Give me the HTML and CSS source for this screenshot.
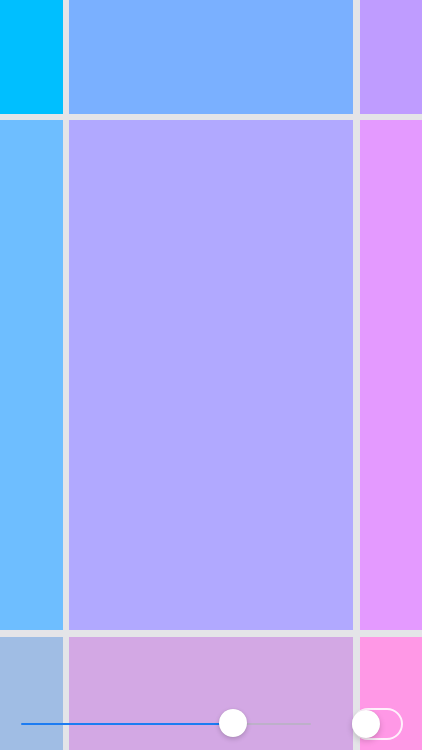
FILE: index.html
```html
<!DOCTYPE html>
<html>
<head>
<meta charset="utf-8">
<link rel="stylesheet" href="styles.css">
</head>
<body>
<div class="screen">
  <div class="grid">
    <div class="cell c11"></div>
    <div class="cell c12"></div>
    <div class="cell c13"></div>
    <div class="cell c21"></div>
    <div class="cell c22"></div>
    <div class="cell c23"></div>
    <div class="cell c31"></div>
    <div class="cell c32"></div>
    <div class="cell c33"></div>
  </div>
  <div class="controls">
    <div class="slider">
      <div class="track"></div>
      <div class="fill" style="width:212px"></div>
      <div class="thumb" style="left:198px"></div>
    </div>
    <div class="toggle">
      <div class="knob"></div>
    </div>
  </div>
</div>
</body>
</html>
```

FILE: styles.css
```css
html, body {
  margin: 0;
  padding: 0;
  width: 422px;
  height: 750px;
  overflow: hidden;
  font-family: "Liberation Sans", sans-serif;
}
.screen {
  position: relative;
  width: 422px;
  height: 750px;
  background: #e4e4e8;
}
.grid {
  display: grid;
  grid-template-columns: 62.5px 284px 62.5px;
  grid-template-rows: 113.5px 510px 113.5px;
  gap: 6.5px;
  width: 422px;
  height: 750px;
}
.c11 { background: #00bfff; }
.c12 { background: #7ab0ff; }
.c13 { background: #bf9cff; }
.c21 { background: #6ebeff; }
.c22 { background: #b1a9ff; }
.c23 { background: #e49aff; }
.c31 { background: #a0bde4; }
.c32 { background: #d3a8e4; }
.c33 { background: #ff98e6; }

.controls {
  position: absolute;
  left: 21px;
  right: 19px;
  top: 708px;
  height: 32px;
  display: flex;
  align-items: center;
  justify-content: space-between;
}
.slider {
  position: relative;
  width: 290px;
  height: 32px;
}
.track {
  position: absolute;
  left: 0;
  right: 0;
  top: 15px;
  height: 2px;
  border-radius: 1px;
  background: rgba(180, 180, 190, 0.7);
}
.fill {
  position: absolute;
  left: 0;
  top: 15px;
  height: 2px;
  border-radius: 1px;
  background: #1c7cf2;
}
.thumb {
  position: absolute;
  top: 1px;
  width: 28px;
  height: 28px;
  border-radius: 50%;
  background: #ffffff;
  box-shadow: 0 2px 5px rgba(0, 0, 0, 0.18), 0 0 1px rgba(0, 0, 0, 0.15);
}
.toggle {
  position: relative;
  width: 47px;
  height: 28px;
  border: 2px solid rgba(255, 255, 255, 0.85);
  border-radius: 16px;
  box-sizing: content-box;
}
.knob {
  position: absolute;
  left: -2px;
  top: 0;
  width: 28px;
  height: 28px;
  border-radius: 50%;
  background: #ffffff;
  box-shadow: 0 3px 6px rgba(0, 0, 0, 0.18), 0 0 1px rgba(0, 0, 0, 0.15);
}
```
